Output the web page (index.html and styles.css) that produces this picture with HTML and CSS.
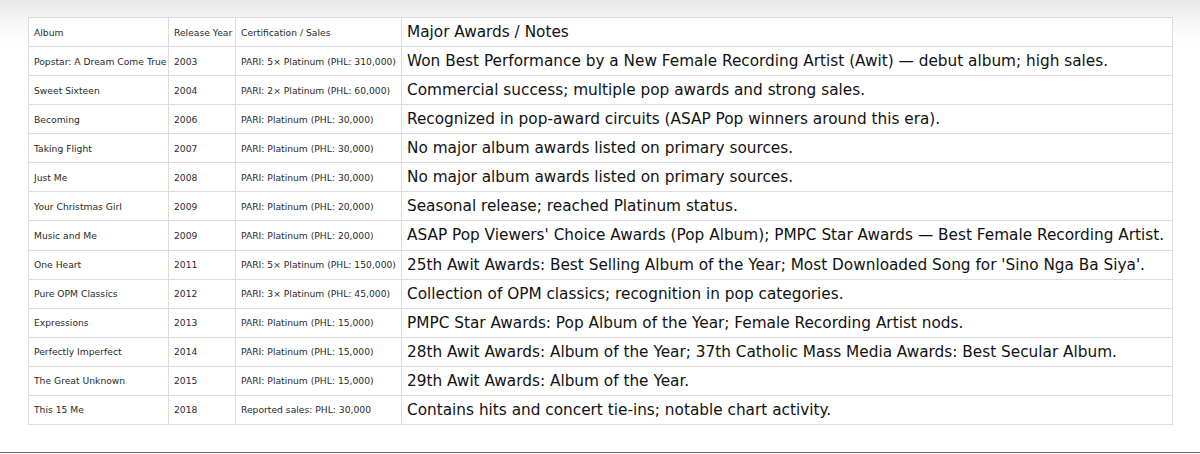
FILE: index.html
```html
<!DOCTYPE html>
<html>
<head>
<meta charset="utf-8">
<link rel="stylesheet" href="styles.css">
</head>
<body>
<div class="page">
<table class="albums">
<colgroup>
<col class="c-album"><col class="c-year"><col class="c-cert"><col class="c-notes">
</colgroup>
<tr><td class="sm">Album</td><td class="sm">Release Year</td><td class="sm">Certification / Sales</td><td class="lg">Major Awards / Notes</td></tr>
<tr><td class="sm">Popstar: A Dream Come True</td><td class="sm">2003</td><td class="sm">PARI: 5× Platinum (PHL: 310,000)</td><td class="lg">Won Best Performance by a New Female Recording Artist (Awit) — debut album; high sales.</td></tr>
<tr><td class="sm">Sweet Sixteen</td><td class="sm">2004</td><td class="sm">PARI: 2× Platinum (PHL: 60,000)</td><td class="lg">Commercial success; multiple pop awards and strong sales.</td></tr>
<tr><td class="sm">Becoming</td><td class="sm">2006</td><td class="sm">PARI: Platinum (PHL: 30,000)</td><td class="lg">Recognized in pop-award circuits (ASAP Pop winners around this era).</td></tr>
<tr><td class="sm">Taking Flight</td><td class="sm">2007</td><td class="sm">PARI: Platinum (PHL: 30,000)</td><td class="lg">No major album awards listed on primary sources.</td></tr>
<tr><td class="sm">Just Me</td><td class="sm">2008</td><td class="sm">PARI: Platinum (PHL: 30,000)</td><td class="lg">No major album awards listed on primary sources.</td></tr>
<tr><td class="sm">Your Christmas Girl</td><td class="sm">2009</td><td class="sm">PARI: Platinum (PHL: 20,000)</td><td class="lg">Seasonal release; reached Platinum status.</td></tr>
<tr><td class="sm">Music and Me</td><td class="sm">2009</td><td class="sm">PARI: Platinum (PHL: 20,000)</td><td class="lg">ASAP Pop Viewers' Choice Awards (Pop Album); PMPC Star Awards — Best Female Recording Artist.</td></tr>
<tr><td class="sm">One Heart</td><td class="sm">2011</td><td class="sm">PARI: 5× Platinum (PHL: 150,000)</td><td class="lg">25th Awit Awards: Best Selling Album of the Year; Most Downloaded Song for 'Sino Nga Ba Siya'.</td></tr>
<tr><td class="sm">Pure OPM Classics</td><td class="sm">2012</td><td class="sm">PARI: 3× Platinum (PHL: 45,000)</td><td class="lg">Collection of OPM classics; recognition in pop categories.</td></tr>
<tr><td class="sm">Expressions</td><td class="sm">2013</td><td class="sm">PARI: Platinum (PHL: 15,000)</td><td class="lg">PMPC Star Awards: Pop Album of the Year; Female Recording Artist nods.</td></tr>
<tr><td class="sm">Perfectly Imperfect</td><td class="sm">2014</td><td class="sm">PARI: Platinum (PHL: 15,000)</td><td class="lg">28th Awit Awards: Album of the Year; 37th Catholic Mass Media Awards: Best Secular Album.</td></tr>
<tr><td class="sm">The Great Unknown</td><td class="sm">2015</td><td class="sm">PARI: Platinum (PHL: 15,000)</td><td class="lg">29th Awit Awards: Album of the Year.</td></tr>
<tr><td class="sm">This 15 Me</td><td class="sm">2018</td><td class="sm">Reported sales: PHL: 30,000</td><td class="lg">Contains hits and concert tie-ins; notable chart activity.</td></tr>
</table>
</div>
</body>
</html>
```
FILE: styles.css
```css
html, body {
  margin: 0;
  padding: 0;
}
body {
  width: 1200px;
  height: 454px;
  overflow: hidden;
  background: linear-gradient(to bottom, #e8e8e8 0px, #f6f6f6 20px, #ffffff 45px);
  font-family: "DejaVu Sans", Verdana, sans-serif;
  color: #222;
}
.page {
  height: 453px;
  border-bottom: 1px solid #666;
  padding: 17px 28px 0 28px;
  box-sizing: border-box;
}
.albums {
  border-collapse: collapse;
  table-layout: fixed;
  width: 1144px;
  height: 408px;
  background: #fff;
}
.c-album { width: 140px; }
.c-year { width: 67px; }
.c-cert { width: 166px; }
.c-notes { width: 771px; }
.albums td {
  border: 1px solid #dcdcdc;
  padding: 0 4px 0 5px;
  white-space: nowrap;
  overflow: visible;
  vertical-align: middle;
}
.albums td.sm {
  font-size: 9.2px;
  color: #2a2a2a;
}
.albums td.lg {
  font-size: 15.3px;
  color: #111;
}
```
